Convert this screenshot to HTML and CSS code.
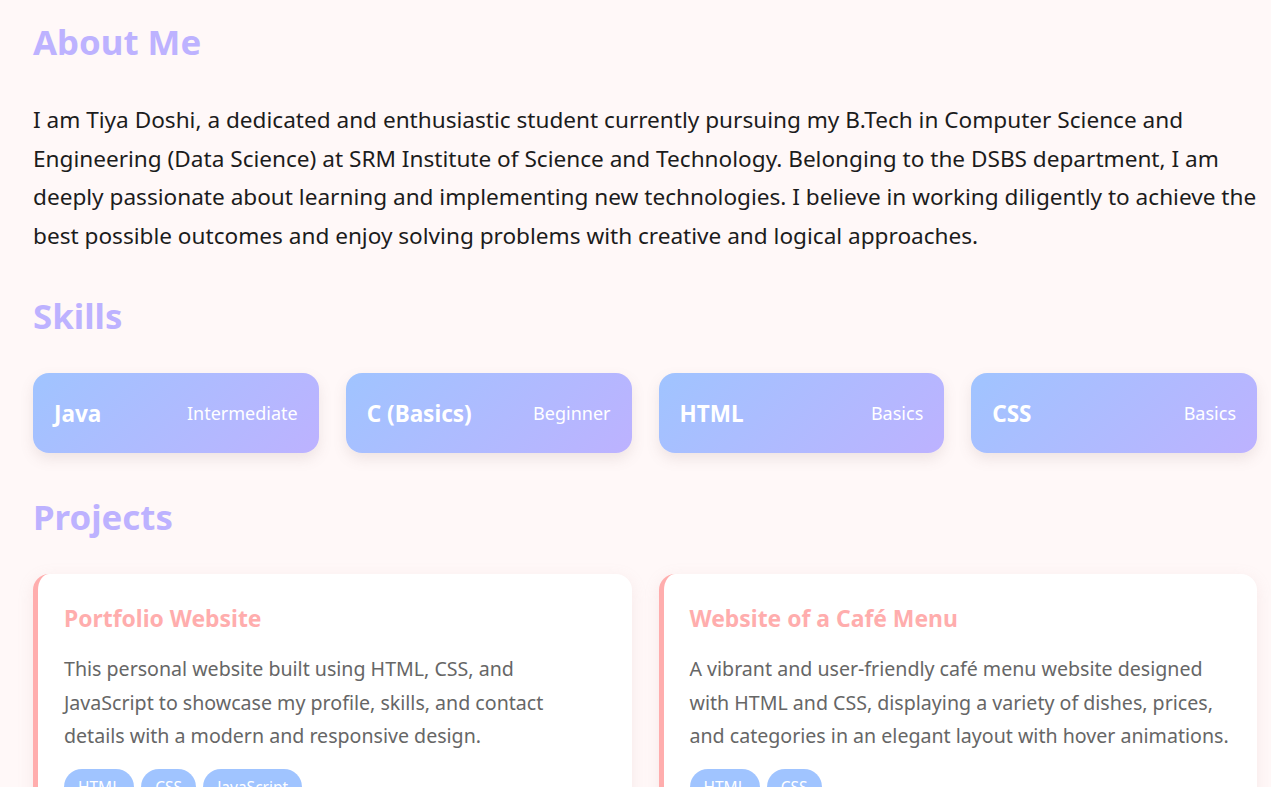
FILE: index.html
```html
<!DOCTYPE html>
<html lang="en">
<head>
<meta charset="utf-8">
<title>Tiya Doshi</title>
<link rel="stylesheet" href="styles.css">
</head>
<body>
<main class="page">
  <section class="section about">
    <h2 class="heading">About Me</h2>
    <p class="about-text">I am Tiya Doshi, a dedicated and enthusiastic student currently pursuing my B.Tech in Computer Science and Engineering (Data Science) at SRM Institute of Science and Technology. Belonging to the DSBS department, I am deeply passionate about learning and implementing new technologies. I believe in working diligently to achieve the best possible outcomes and enjoy solving problems with creative and logical approaches.</p>
  </section>

  <section class="section skills">
    <h2 class="heading">Skills</h2>
    <div class="skill-grid">
      <div class="skill"><span class="skill-name">Java</span><span class="skill-level">Intermediate</span></div>
      <div class="skill"><span class="skill-name">C (Basics)</span><span class="skill-level">Beginner</span></div>
      <div class="skill"><span class="skill-name">HTML</span><span class="skill-level">Basics</span></div>
      <div class="skill"><span class="skill-name">CSS</span><span class="skill-level">Basics</span></div>
    </div>
  </section>

  <section class="section projects">
    <h2 class="heading">Projects</h2>
    <div class="project-grid">
      <article class="project">
        <h3 class="project-title">Portfolio Website</h3>
        <p class="project-text">This personal website built using HTML, CSS, and JavaScript to showcase my profile, skills, and contact details with a modern and responsive design.</p>
        <div class="tags"><span class="tag">HTML</span><span class="tag">CSS</span><span class="tag">JavaScript</span></div>
      </article>
      <article class="project">
        <h3 class="project-title">Website of a Café Menu</h3>
        <p class="project-text">A vibrant and user-friendly café menu website designed with HTML and CSS, displaying a variety of dishes, prices, and categories in an elegant layout with hover animations.</p>
        <div class="tags"><span class="tag">HTML</span><span class="tag">CSS</span></div>
      </article>
    </div>
  </section>
</main>
</body>
</html>
```

FILE: styles.css
```css
* { box-sizing: border-box; }

html, body {
  margin: 0;
  padding: 0;
  background: #fff8f8;
  font-family: "Noto Sans", "Open Sans", sans-serif;
  color: #1a1a1a;
}

.page {
  padding: 18px 14px 0 33px;
}

.heading {
  margin: 0;
  font-size: 34.8px;
  font-weight: 700;
  color: #bdb2ff;
  line-height: 48px;
}

.about-text {
  margin: 35px 0 0;
  font-size: 22.6px;
  line-height: 38.5px;
  color: #1c1c1c;
}

.skills { margin-top: 37px; }

.skill-grid {
  margin-top: 33px;
  display: grid;
  grid-template-columns: repeat(4, 1fr);
  gap: 27px;
}

.skill {
  height: 80px;
  border-radius: 16px;
  background: linear-gradient(135deg, #a0c4ff, #bdb2ff);
  box-shadow: 0 6px 14px rgba(120, 90, 90, 0.13);
  display: flex;
  align-items: center;
  justify-content: space-between;
  padding: 0 21px;
  color: #ffffff;
}

.skill-name {
  font-size: 22.5px;
  font-weight: 700;
}

.skill-level {
  font-size: 18px;
}

.projects { margin-top: 40px; }

.project-grid {
  margin-top: 33px;
  display: grid;
  grid-template-columns: repeat(2, 1fr);
  gap: 27px;
}

.project {
  background: #ffffff;
  border-left: 5px solid #ffadad;
  border-radius: 16px;
  box-shadow: 0 4px 16px rgba(200, 150, 150, 0.15);
  padding: 29px 26px 30px 26px;
}

.project-title {
  margin: 0;
  font-size: 22.9px;
  font-weight: 700;
  color: #ffadad;
  line-height: 32px;
}

.project-text {
  margin: 17px 0 0;
  font-size: 19.6px;
  line-height: 33.5px;
  color: #666666;
}

.tags {
  margin-top: 16px;
  display: flex;
  gap: 7px;
  flex-wrap: wrap;
}

.tag {
  background: #a0c4ff;
  color: #ffffff;
  font-size: 15.5px;
  border-radius: 20px;
  padding: 7px 14px;
}
```
